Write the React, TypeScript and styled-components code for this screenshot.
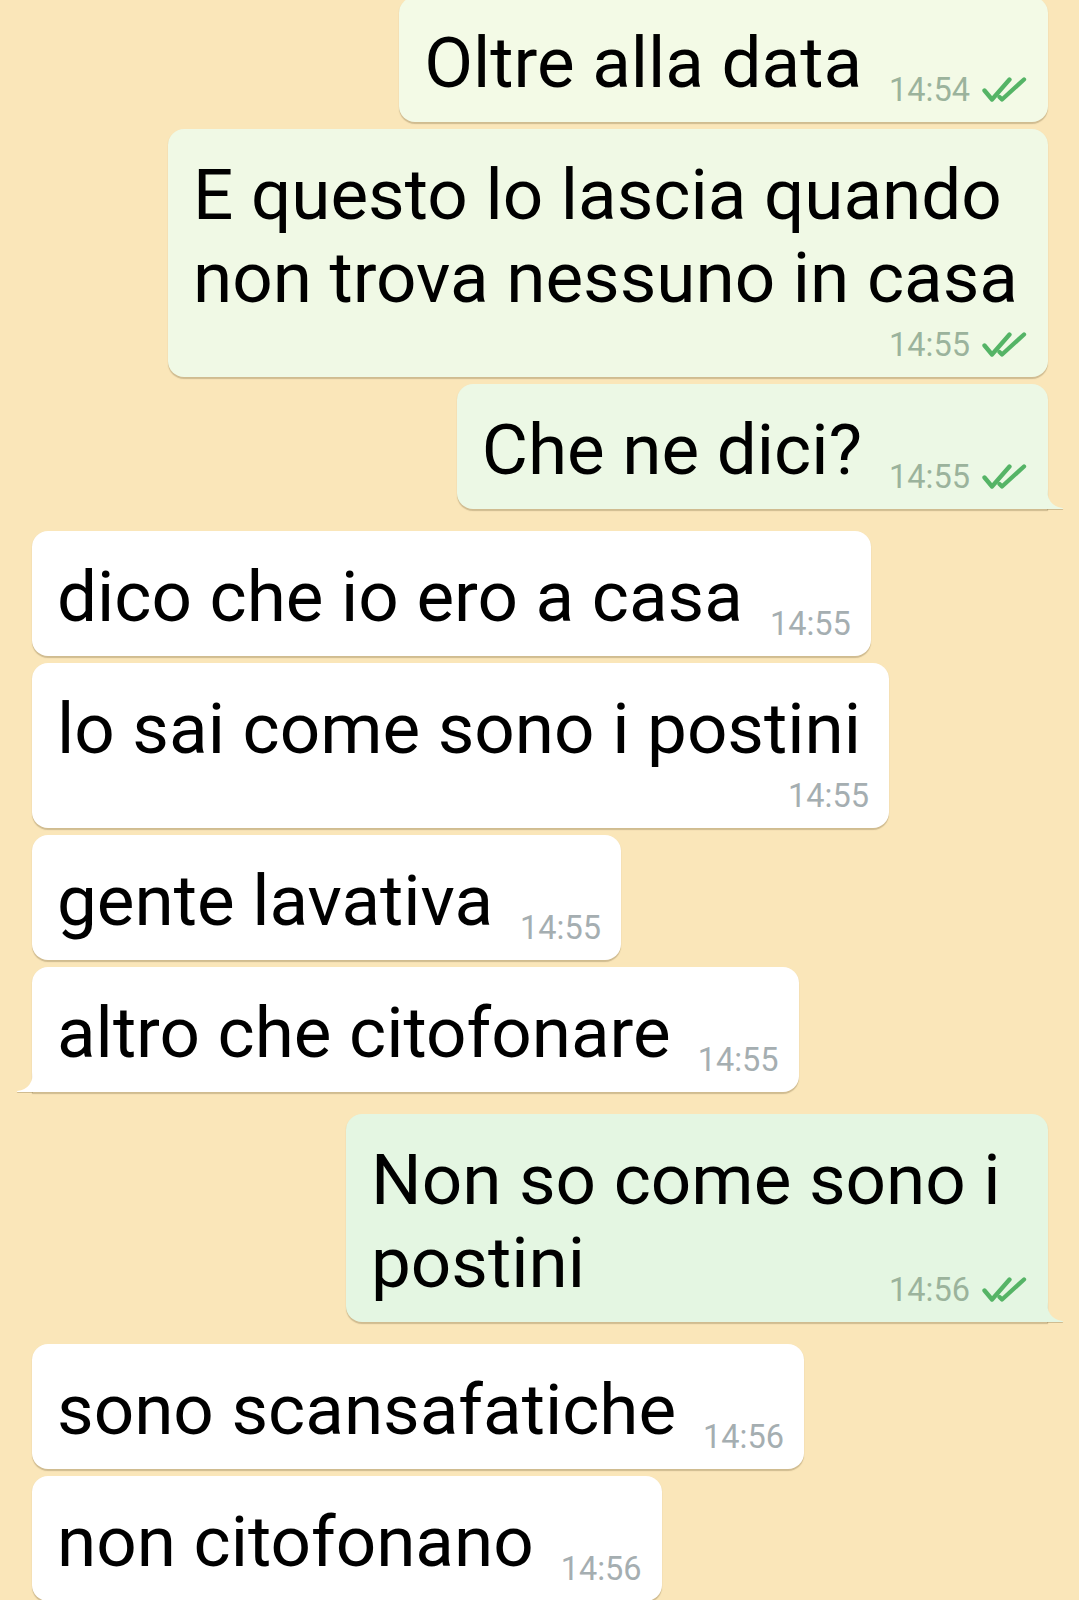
import React from "react";
import styled, { createGlobalStyle, css } from "styled-components";

const GlobalStyle = createGlobalStyle`
  html, body {
    margin: 0;
    padding: 0;
    background: #fae6b9;
  }
  body {
    font-family: Roboto, "Noto Sans", "Liberation Sans", sans-serif;
    -webkit-font-smoothing: antialiased;
  }
`;

const Screen = styled.main`
  width: 1079px;
  height: 1600px;
  box-sizing: border-box;
  padding: 0 31px 0 32px;
  background: #fae6b9;
  display: flex;
  flex-direction: column;
  gap: 22px;
  overflow: hidden;
`;

const Group = styled.section<{ $out: boolean; $first?: boolean }>`
  display: flex;
  flex-direction: column;
  gap: 7px;
  align-items: ${(p) => (p.$out ? "flex-end" : "flex-start")};
  margin-top: ${(p) => (p.$first ? "-3px" : "0")};
`;

const Bubble = styled.div<{
  $out: boolean;
  $tail?: boolean;
  $bg: string;
  $minW?: number;
}>`
  position: relative;
  display: flex;
  flex-direction: column;
  box-sizing: border-box;
  padding: 24px 20px 18px 25px;
  border-radius: 16px;
  background: ${(p) => p.$bg};
  box-shadow: 0 1.5px 1px rgba(130, 110, 70, 0.35);
  min-width: ${(p) => (p.$minW ? `${p.$minW}px` : "0")};
  ${(p) =>
    p.$tail &&
    (p.$out
      ? css`
          border-bottom-right-radius: 0;
        `
      : css`
          border-bottom-left-radius: 0;
        `)}
`;

const Tail = styled.svg<{ $out: boolean }>`
  position: absolute;
  bottom: 0;
  width: 17px;
  height: 21px;
  filter: drop-shadow(0 1.5px 0.6px rgba(130, 110, 70, 0.35));
  ${(p) =>
    p.$out
      ? css`
          right: -16px;
        `
      : css`
          left: -16px;
          transform: scaleX(-1);
        `}
`;

const Line = styled.div`
  font-size: 71px;
  line-height: 83px;
  color: #000;
  white-space: nowrap;
`;

const LastRow = styled.div`
  display: flex;
  align-items: flex-end;
  justify-content: space-between;
  gap: 27px;
`;

const Meta = styled.div<{ $out: boolean; $below?: boolean }>`
  display: flex;
  align-items: center;
  gap: 12px;
  flex-shrink: 0;
  font-size: 32.5px;
  line-height: 32px;
  color: ${(p) => (p.$out ? "#9bb39c" : "#a5aeb1")};
  margin-bottom: -2px;
  ${(p) =>
    p.$below &&
    css`
      align-self: flex-end;
      margin-top: 10px;
    `}
`;

const Checks = () => (
  <svg width="46" height="26" viewBox="0 0 46 26" fill="none">
    <path
      d="M2.5 13.5 L10 22.5 L27.5 2.5"
      stroke="#55b466"
      strokeWidth="4.3"
      strokeLinecap="round"
      strokeLinejoin="round"
    />
    <path
      d="M17.5 20 L20 22.5 L42 2.5"
      stroke="#55b466"
      strokeWidth="4.3"
      strokeLinecap="round"
      strokeLinejoin="round"
    />
  </svg>
);

type Msg = {
  lines: string[];
  time: string;
  below?: boolean;
  tail?: boolean;
  bg?: string;
  minW?: number;
};

type Grp = { out: boolean; items: Msg[] };

const groups: Grp[] = [
  {
    out: true,
    items: [
      { lines: ["Oltre alla data"], time: "14:54", bg: "#f3fae6" },
      {
        lines: ["E questo lo lascia quando", "non trova nessuno in casa"],
        time: "14:55",
        below: true,
        bg: "#f0f9e5",
        minW: 880,
      },
      { lines: ["Che ne dici?"], time: "14:55", tail: true, bg: "#ecf8e5" },
    ],
  },
  {
    out: false,
    items: [
      { lines: ["dico che io ero a casa"], time: "14:55" },
      {
        lines: ["lo sai come sono i postini"],
        time: "14:55",
        below: true,
        minW: 857,
      },
      { lines: ["gente lavativa"], time: "14:55" },
      { lines: ["altro che citofonare"], time: "14:55", tail: true },
    ],
  },
  {
    out: true,
    items: [
      {
        lines: ["Non so come sono i", "postini"],
        time: "14:56",
        tail: true,
        bg: "#e4f6e2",
        minW: 702,
      },
    ],
  },
  {
    out: false,
    items: [
      { lines: ["sono scansafatiche"], time: "14:56" },
      { lines: ["non citofonano"], time: "14:56" },
    ],
  },
];

const Message = ({ m, out }: { m: Msg; out: boolean }) => {
  const bg = m.bg ?? (out ? "#e4f6e2" : "#ffffff");
  const meta = (
    <Meta $out={out} $below={m.below}>
      <span>{m.time}</span>
      {out && <Checks />}
    </Meta>
  );
  const head = m.below ? m.lines : m.lines.slice(0, -1);
  const last = m.below ? null : m.lines[m.lines.length - 1];
  return (
    <Bubble $out={out} $tail={m.tail} $bg={bg} $minW={m.minW}>
      {head.map((l, i) => (
        <Line key={i}>{l}</Line>
      ))}
      {m.below ? (
        meta
      ) : (
        <LastRow>
          <Line>{last}</Line>
          {meta}
        </LastRow>
      )}
      {m.tail && (
        <Tail $out={out} viewBox="0 0 17 21">
          <path d="M0 0 Q0 18 15.5 20 Q17 20.5 15.5 21 L0 21 Z" fill={bg} />
        </Tail>
      )}
    </Bubble>
  );
};

export default function App() {
  return (
    <>
      <GlobalStyle />
      <Screen>
        {groups.map((g, gi) => (
          <Group key={gi} $out={g.out} $first={gi === 0}>
            {g.items.map((m, i) => (
              <Message key={i} m={m} out={g.out} />
            ))}
          </Group>
        ))}
      </Screen>
    </>
  );
}
